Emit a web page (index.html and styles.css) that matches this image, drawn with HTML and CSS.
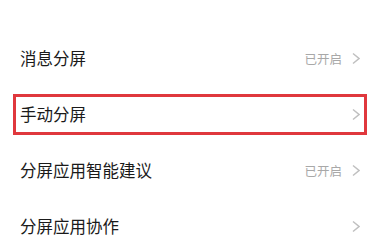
FILE: index.html
```html
<!DOCTYPE html>
<html lang="zh-CN">
<head>
    <meta charset="UTF-8">
    <meta name="viewport" content="width=device-width, initial-scale=1.0">
    <title>分屏设置</title>
    <link rel="stylesheet" href="styles.css">
</head>
<body>
    <div class="settings">
        <div class="row">
            <span class="label">消息分屏</span>
            <span class="value">已开启</span>
            <svg class="chevron" viewBox="0 0 8 12"><path d="M1 1 L7 6 L1 11" /></svg>
        </div>
        <!-- highlighted entry -->
        <div class="row marked">
            <span class="label">手动分屏</span>
            <svg class="chevron" viewBox="0 0 8 12"><path d="M1 1 L7 6 L1 11" /></svg>
        </div>
        <div class="row">
            <span class="label">分屏应用智能建议</span>
            <span class="value">已开启</span>
            <svg class="chevron" viewBox="0 0 8 12"><path d="M1 1 L7 6 L1 11" /></svg>
        </div>
        <div class="row">
            <span class="label">分屏应用协作</span>
            <svg class="chevron" viewBox="0 0 8 12"><path d="M1 1 L7 6 L1 11" /></svg>
        </div>
    </div>
</body>
</html>
```

FILE: styles.css
```css
/* General Styling */
body { margin: 0; background-color: #fff; font-family: "Noto Sans CJK SC", "Noto Sans", sans-serif; }
.settings { padding-top: 30px; }

/* Rows */
.row { position: relative; display: flex; align-items: center; height: 56px; padding: 0 18px 0 20px; }
.label { flex: 1; font-size: 16.5px; color: #1a1a1a; }
.value { font-size: 12.5px; color: #a8a8a8; margin-right: 10px; }
.chevron { width: 8px; height: 13px; }
.chevron path { fill: none; stroke: #c0c0c0; stroke-width: 1.5; }

/* Red annotation box */
.marked::after {
    content: "";
    position: absolute;
    top: 8px;
    bottom: 7px;
    left: 13px;
    right: 11px;
    border: 3px solid #e0383d;
}
```
